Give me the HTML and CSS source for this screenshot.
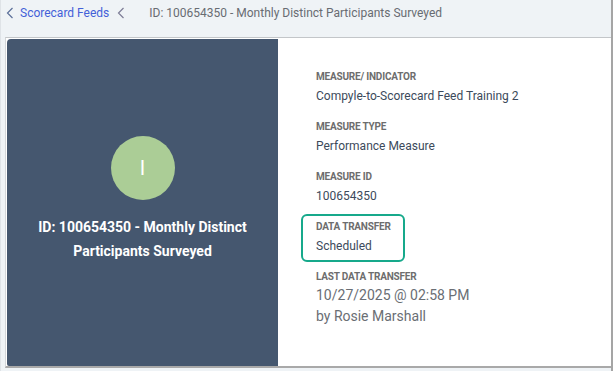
FILE: index.html
```html
<!DOCTYPE html>
<html lang="en">
<head>
    <meta charset="UTF-8">
    <title>Scorecard Feed</title>
    <link rel="stylesheet" href="styles.css">
</head>
<body>
    <div class="frame">
        <header class="crumbs">
            <svg class="chev" width="8" height="12" viewBox="0 0 8 12"><path d="M6.5 1 L1.5 6 L6.5 11" fill="none" stroke="#5b6f99" stroke-width="1.2"/></svg>
            <a class="crumb-link" href="#">Scorecard Feeds</a>
            <svg class="chev chev-sep" width="8" height="12" viewBox="0 0 8 12"><path d="M6.5 1 L1.5 6 L6.5 11" fill="none" stroke="#7d7d96" stroke-width="1.2"/></svg>
            <span class="crumb-current">ID: 100654350 - Monthly Distinct Participants Surveyed</span>
        </header>

        <main class="card">
            <section class="summary">
                <div class="avatar">I</div>
                <h1 class="summary-title">ID: 100654350 - Monthly Distinct Participants Surveyed</h1>
            </section>

            <section class="details">
                <div class="field">
                    <div class="field-label">Measure/ Indicator</div>
                    <div class="field-value">Compyle-to-Scorecard Feed Training 2</div>
                </div>
                <div class="field">
                    <div class="field-label">Measure Type</div>
                    <div class="field-value">Performance Measure</div>
                </div>
                <div class="field">
                    <div class="field-label">Measure ID</div>
                    <div class="field-value">100654350</div>
                </div>
                <div class="field highlight">
                    <div class="field-label">Data Transfer</div>
                    <div class="field-value">Scheduled</div>
                </div>
                <div class="field">
                    <div class="field-label">Last Data Transfer</div>
                    <div class="field-value big">10/27/2025 @ 02:58 PM<br>by Rosie Marshall</div>
                </div>
            </section>
        </main>
    </div>
</body>
</html>
```
FILE: styles.css
```css
@charset "utf-8";

*{ box-sizing: border-box; margin: 0; padding: 0; }

body{
    background: #eff3f6;
    font-family: Roboto, "Liberation Sans", Arial, sans-serif;
}

.frame{
    width: 613px;
    height: 371px;
    border-left: 1px solid #dfe3e7;
    border-right: 2px solid #a5a5a5;
}

/* migas de pan */
.crumbs{
    height: 37px;
    display: flex;
    align-items: flex-start;
    padding: 6px 0 0 5px;
    font-size: 12px;
    line-height: 14px;
}
.chev{ display: block; margin-top: 1px; }
.crumb-link{
    color: #4360d8;
    text-decoration: none;
    margin-left: 6px;
}
.chev-sep{ margin-left: 8px; }
.crumb-current{
    color: #686c72;
    margin-left: 24px;
}

.card{
    margin-left: 4px;
    height: 331px;
    display: flex;
    background: #fff;
    border-top: 1px solid #c3c6c9;
    border-bottom: 2px solid #a9a9a9;
    border-left: 1px solid #d3d6d9;
    padding: 1px 0 0 1px;
}

.summary{
    width: 271px;
    background: #45576f;
    border-top-left-radius: 4px;
    border-bottom-left-radius: 2px;
    display: flex;
    flex-direction: column;
    align-items: center;
    padding-top: 97px;
}
.avatar{
    width: 64px;
    height: 64px;
    border-radius: 50%;
    background: #abcd96;
    color: #fff;
    font-size: 20px;
    line-height: 64px;
    text-align: center;
}
.summary-title{
    margin-top: 15px;
    width: 230px;
    color: #fff;
    font-size: 14px;
    font-weight: 700;
    line-height: 24px;
    text-align: center;
}

.details{
    flex: 1;
    padding: 32px 0 0 38px;
}
.field{ margin-bottom: 15px; }
.field-label{
    font-size: 10px;
    line-height: 12px;
    font-weight: 700;
    text-transform: uppercase;
    color: #6d6d6d;
    letter-spacing: -0.2px;
}
.field-value{
    margin-top: 3px;
    font-size: 12px;
    line-height: 20px;
    color: #3c4a5b;
}
.field-value.big{
    margin-top: 2px;
    font-size: 14px;
    line-height: 21px;
    color: #6a6e74;
}
.highlight{
    width: fit-content;
    border: 2px solid #16a98b;
    border-radius: 6px;
    padding: 5px 12px 4px 13px;
    margin: -7px 0 9px -15px;
}
```
